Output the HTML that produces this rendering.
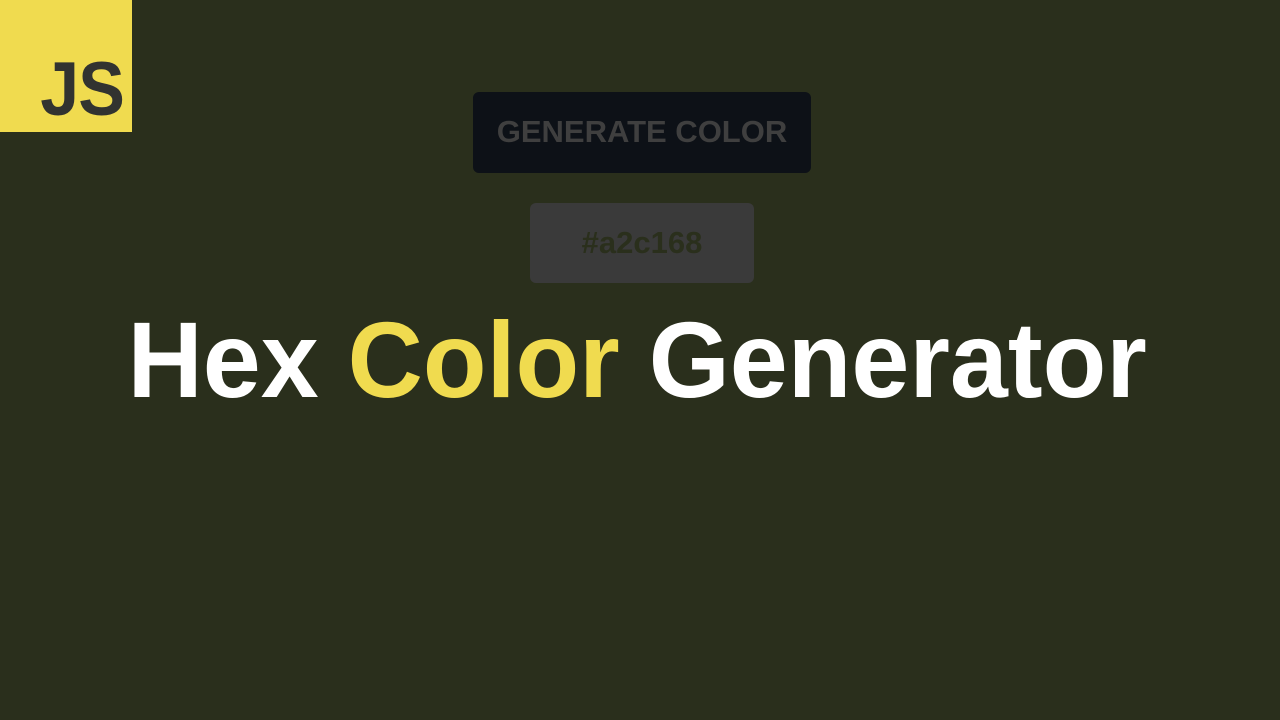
<!DOCTYPE html>
<html><head><meta charset="utf-8"><style>
html,body{margin:0;padding:0}
body{width:1280px;height:720px;background:#2a2f1c;position:relative;overflow:hidden;font-family:"Liberation Sans",Arial,sans-serif}
.logo{position:absolute;left:0;top:0;width:132px;height:132px;background:#f0db4f}
.logo span{position:absolute;right:8px;bottom:4px;font-weight:bold;font-size:76px;color:#323330;letter-spacing:-1px;line-height:1;transform:scaleX(0.92);transform-origin:right}
.btn{position:absolute;left:473px;top:92px;width:338px;height:81px;background:#0d1117;border-radius:6px;color:#3f3f3f;font-weight:bold;font-size:31px;text-align:center;line-height:79px;white-space:nowrap}
.hex{position:absolute;left:530px;top:203px;width:224px;height:80px;background:#3a3a3a;border-radius:6px;color:#2a2f1c;font-weight:bold;font-size:31px;text-align:center;line-height:80px}
.title{position:absolute;left:0;width:1280px;top:300px;text-align:center}
.title div{display:inline-block;font-weight:bold;font-size:108px;color:#fff;line-height:120px;transform:scaleX(0.965);transform-origin:center;white-space:nowrap;margin-left:-6px}
.y{color:#f0db4f}
</style></head><body>
<div class="logo"><span>JS</span></div>
<div class="btn">GENERATE COLOR</div>
<div class="hex">#a2c168</div>
<div class="title"><div>Hex <span class="y">Color</span> Generator</div></div>
</body></html>
